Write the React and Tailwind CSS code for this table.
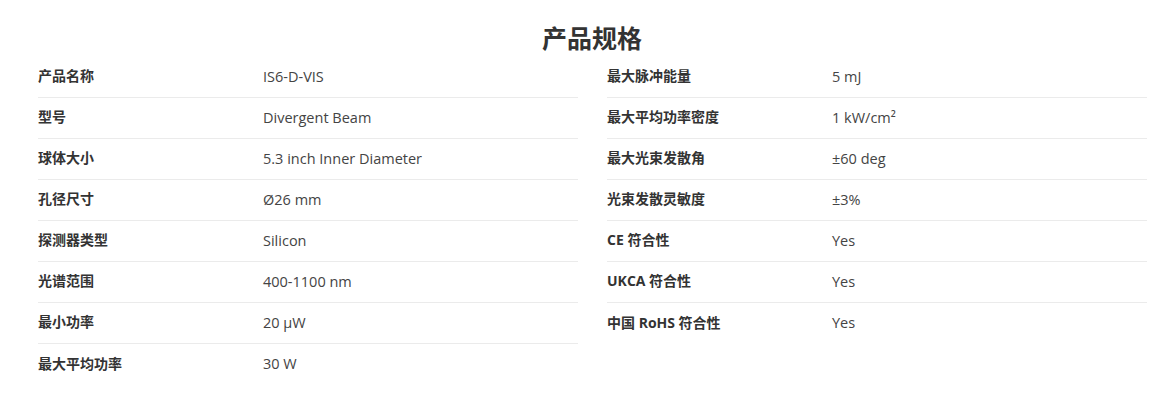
export default function App() {
  const left = [
    ["产品名称", "IS6-D-VIS"],
    ["型号", "Divergent Beam"],
    ["球体大小", "5.3 inch Inner Diameter"],
    ["孔径尺寸", "Ø26 mm"],
    ["探测器类型", "Silicon"],
    ["光谱范围", "400-1100 nm"],
    ["最小功率", "20 µW"],
    ["最大平均功率", "30 W"],
  ];
  const right = [
    ["最大脉冲能量", "5 mJ"],
    ["最大平均功率密度", "1 kW/cm²"],
    ["最大光束发散角", "±60 deg"],
    ["光束发散灵敏度", "±3%"],
    ["CE 符合性", "Yes"],
    ["UKCA 符合性", "Yes"],
    ["中国 RoHS 符合性", "Yes"],
  ];
  const Col = ({ rows }) => (
    <div className="flex flex-col">
      {rows.map(([k, v], i) => (
        <div
          key={i}
          className={`flex items-center h-[41px] ${i < rows.length - 1 ? "border-b border-[#ebebeb]" : ""}`}
        >
          <div className="w-[225px] shrink-0 font-bold text-[14px] text-[#333] leading-[20px] -mt-[2px]">{k}</div>
          <div className="text-[14.5px] text-[#444] leading-[20px] -mt-[1px]">{v}</div>
        </div>
      ))}
    </div>
  );
  return (
    <div
      className="w-[1174px] h-[420px] bg-white"
      style={{ fontFamily: '"Open Sans", "Noto Sans CJK SC", sans-serif' }}
    >
      <h2 className="text-center text-[25px] font-bold text-[#333] pt-[20px] h-[57px] leading-[36px] ml-[10px]">
        产品规格
      </h2>
      <div className="ml-[38px] w-[1109px] grid grid-cols-2 gap-x-[29px]">
        <Col rows={left} />
        <Col rows={right} />
      </div>
    </div>
  );
}
